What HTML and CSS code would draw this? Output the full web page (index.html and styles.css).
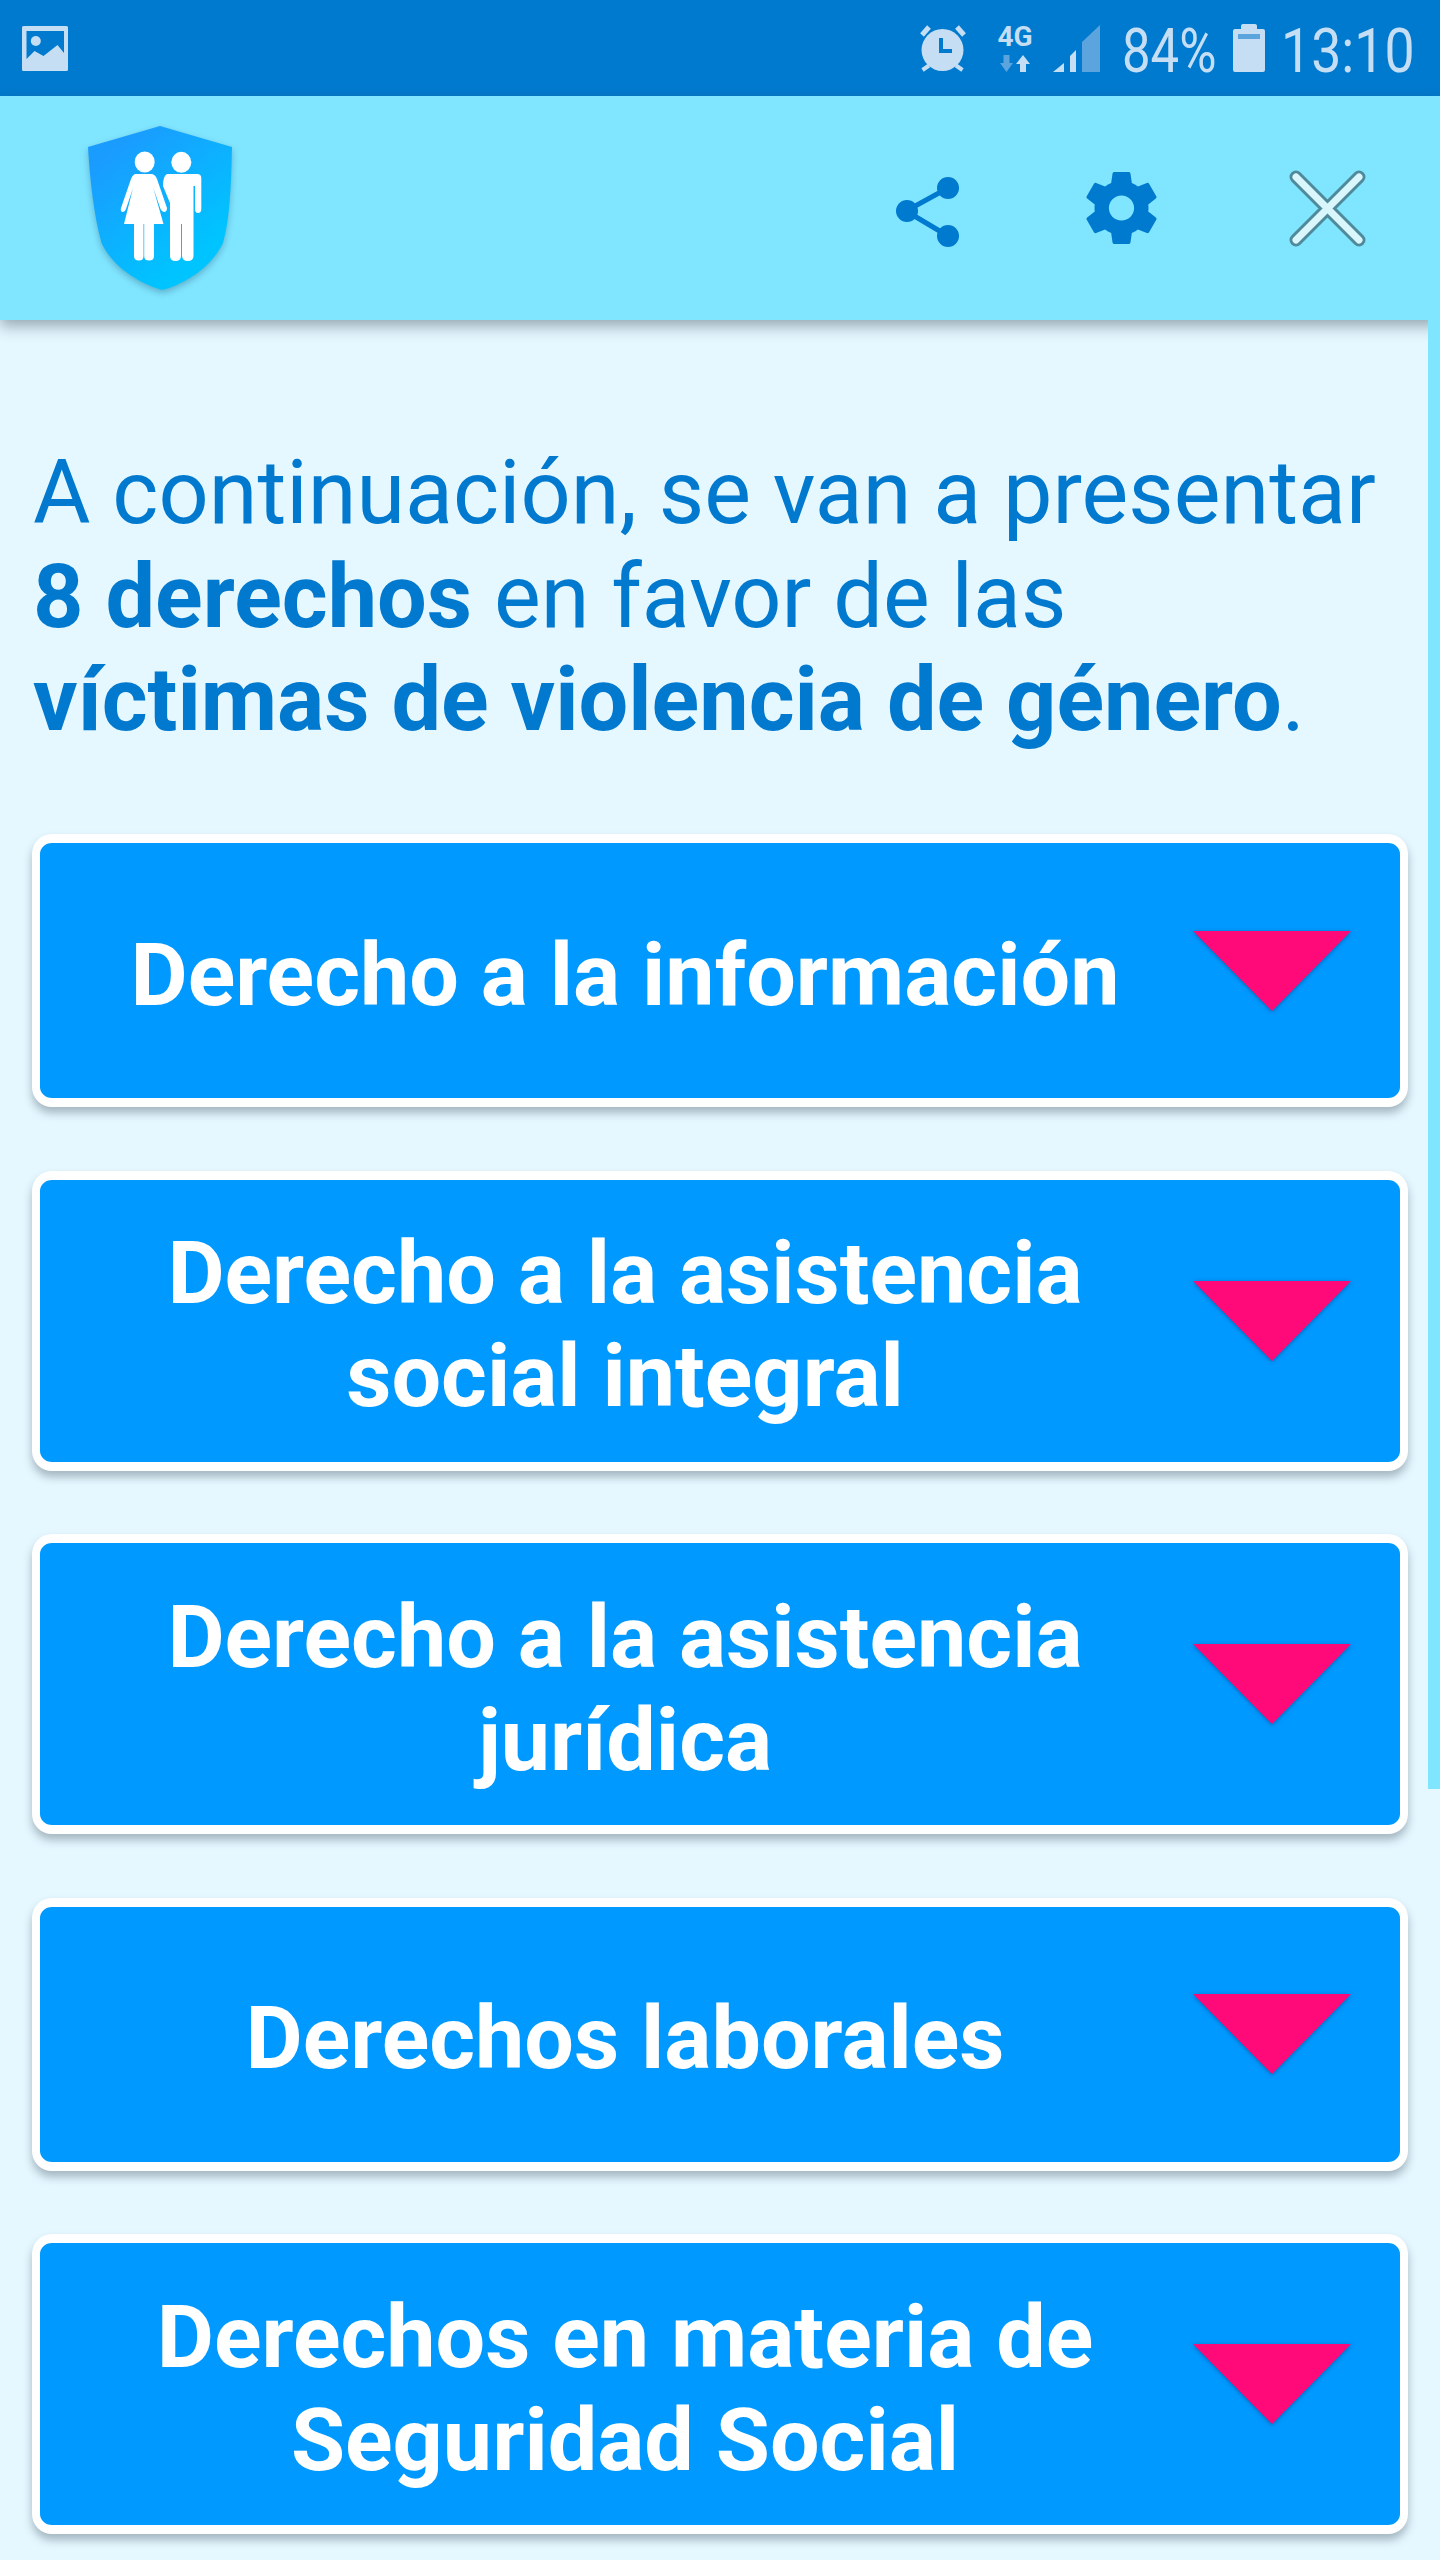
FILE: index.html
```html
<!DOCTYPE html>
<html lang="es">
<head>
  <meta charset="UTF-8">
  <title>Derechos</title>
  <link rel="stylesheet" href="styles.css">
</head>
<body>
  <div class="status">
    <svg width="46" height="45" viewBox="0 0 46 45">
      <path fill="#c5def3" fill-rule="evenodd" d="M1.500 0h43A1.500 1.500 0 0 1 46 1.500v42a1.500 1.500 0 0 1-1.500 1.500h-43A1.500 1.500 0 0 1 0 43.500v-42A1.500 1.500 0 0 1 1.500 0zM4.500 5v28l8-8 9 5 14-11 6.500 8V5z"/>
      <circle cx="13.800" cy="15" r="5" fill="#c5def3"/>
    </svg>
    <div class="st-right">
      <svg class="st-alarm" width="48" height="48" viewBox="0 0 48 48">
        <circle cx="23.500" cy="26" r="21" fill="#c5def3"/>
        <path d="M3 11 10 3M45 11 38 3" stroke="#c5def3" stroke-width="5" fill="none"/>
        <path d="M3.500 46 10 41.500M43.500 46 37 41.500" stroke="#c5def3" stroke-width="4" fill="none"/>
        <path d="M22 14v13h11" fill="none" stroke="#007acf" stroke-width="4"/>
      </svg>
      <div class="st-net">
        <span class="st-4g">4G</span>
        <svg width="30" height="17" viewBox="0 0 30 17">
          <path d="M3.500 0h6v8H13l-6.500 9L0 8h3.500z" fill="#5ba4de"/>
          <path d="M23 0l7 9h-4v8h-6V9h-4z" fill="#c5def3"/>
        </svg>
      </div>
      <svg class="st-signal" width="47" height="47" viewBox="0 0 47 47">
        <path d="M0 47 11 38v9z" fill="#c5def3"/>
        <path d="M17 31l6-6v22h-6z" fill="#c5def3"/>
        <path d="M29 17 47 0v47H29z" fill="#5ba4de"/>
      </svg>
      <span class="st-text st-pct">84%</span>
      <svg class="st-batt" width="32" height="48" viewBox="0 0 32 48">
        <path fill="#c5def3" d="M2 5h6V2a2 2 0 0 1 2-2h12a2 2 0 0 1 2 2v3h6a2 2 0 0 1 2 2v39a2 2 0 0 1-2 2H2a2 2 0 0 1-2-2V7a2 2 0 0 1 2-2z"/>
        <rect x="5" y="10" width="22" height="5" fill="#5ba4de"/>
      </svg>
      <span class="st-text st-time">13:10</span>
    </div>
  </div>

  <header class="topbar">
    <svg class="logo" width="144" height="164" viewBox="0 0 144 164">
      <defs>
        <linearGradient id="shield" x1="0.1" y1="0.2" x2="0.6" y2="0.9">
          <stop offset="0" stop-color="#1a9cff"/>
          <stop offset="1" stop-color="#00c4ff"/>
        </linearGradient>
      </defs>
      <path d="M72 0 144 21C143 60 142 92 135 117 124 140 98 158 74 164 50 157 24 140 13.500 117 6 90 2 55 0 21z" fill="url(#shield)"/>
      <g fill="#fff">
        <ellipse cx="56.700" cy="36" rx="10" ry="10.500"/>
        <ellipse cx="93.300" cy="36.300" rx="10" ry="10.500"/>
        <path d="M48 48H63Q67 48 69 53L79 82Q79 86 76 86 74 86 72.500 83L65 61 75.500 98H66V130Q66 134.500 61 134.500 56.200 134.500 56.200 130V98H55.500V130Q55.500 134.500 51 134.500 46 134.500 46 130V98H36L45 62 38 83Q37 86 35 86 32 86 33 82L43 53Q45 48 48 48z"/>
        <path d="M79 48H109Q113.300 48 113.300 52V83Q113.300 87 110 87 107 87 107 83V60H105.500V130Q105.500 135 99.500 135 94.500 135 94 130V98H93V130Q93 135 87.500 135 82 135 82 130V77L75 60Q75 50 79 48z"/>
      </g>
    </svg>
    <div class="actions">
      <svg class="act-share" width="64" height="70" viewBox="0 0 64 70">
        <path d="M52 11 10 34l42 25" fill="none" stroke="#007acf" stroke-width="5"/>
        <circle cx="52" cy="11" r="11" fill="#007acf"/>
        <circle cx="11" cy="34" r="11" fill="#007acf"/>
        <circle cx="52" cy="59" r="11" fill="#007acf"/>
      </svg>
      <svg width="71" height="72" viewBox="2.400 2 19.200 20">
        <path fill="#007acf" d="M19.430 12.980c.04-.32.07-.64.07-.98s-.03-.66-.07-.98l2.110-1.650c.19-.15.240-.42.120-.64l-2-3.460c-.12-.22-.390-.30-.610-.22l-2.490 1c-.520-.4-1.080-.73-1.690-.98l-.38-2.650C14.460 2.180 14.250 2 14 2h-4c-.25 0-.46.18-.490.42l-.38 2.650c-.610.25-1.170.59-1.690.98l-2.490-1c-.23-.09-.49 0-.610.22l-2 3.460c-.13.22-.07.49.12.640l2.110 1.650c-.04.32-.07.65-.07.98s.03.66.07.98l-2.110 1.650c-.19.15-.24.42-.12.640l2 3.460c.12.22.39.3.610.22l2.490-1c.52.4 1.080.73 1.690.98l.38 2.650c.03.24.24.42.49.42h4c.25 0 .46-.18.490-.42l.38-2.650c.610-.25 1.170-.59 1.690-.98l2.490 1c.23.09.49 0 .610-.22l2-3.460c.12-.22.07-.49-.12-.640zM12 15.500c-1.930 0-3.500-1.570-3.500-3.500s1.570-3.500 3.500-3.500 3.500 1.570 3.500 3.500-1.570 3.500-3.500 3.500z"/>
      </svg>
      <svg width="79" height="79" viewBox="0 0 79 79">
        <path d="M8 8 71 71M71 8 8 71" fill="none" stroke="#4f8a9b" stroke-width="13" stroke-linecap="round"/>
        <path d="M8 8 71 71M71 8 8 71" fill="none" stroke="#d9f6fd" stroke-width="7" stroke-linecap="round"/>
      </svg>
    </div>
  </header>

  <main class="content">
    <p class="intro">A continuación, se van a presentar <b>8 derechos</b> en favor de las <b>víctimas de violencia de género</b>.</p>

    <div class="card"><span class="card-title">Derecho a la información</span><i class="arrow"></i></div>
    <div class="card card-tall"><span class="card-title">Derecho a la asistencia<br>social integral</span><i class="arrow"></i></div>
    <div class="card card-tall"><span class="card-title">Derecho a la asistencia<br>jurídica</span><i class="arrow"></i></div>
    <div class="card"><span class="card-title">Derechos laborales</span><i class="arrow"></i></div>
    <div class="card card-tall"><span class="card-title">Derechos en materia de<br>Seguridad Social</span><i class="arrow"></i></div>
  </main>
  <div class="scrollthumb"></div>
</body>
</html>
```

FILE: styles.css
```css
html, body {
  margin: 0;
  padding: 0;
}

body {
  width: 1440px;
  height: 2560px;
  overflow: hidden;
  position: relative;
  background-color: #e5f7ff;
  font-family: Roboto, sans-serif;
}

.status {
  height: 96px;
  background-color: #007acf;
  display: flex;
  justify-content: space-between;
  align-items: center;
  padding: 0 28px 0 22px;
  box-sizing: border-box;
}

.st-right {
  display: flex;
  align-items: center;
}

.st-alarm {
  margin-right: 29px;
}

.st-net {
  display: flex;
  flex-direction: column;
  align-items: center;
  gap: 8px;
  width: 38px;
  margin-top: 3px;
  margin-right: 19px;
}

.st-4g {
  color: #c5def3;
  font-size: 28px;
  font-weight: 700;
  line-height: 20px;
}

.st-signal {
  margin-right: 22px;
}

.st-text {
  color: #c5def3;
  font-size: 62px;
  font-weight: 400;
  line-height: 60px;
  margin-top: 5px;
  white-space: nowrap;
  transform: scaleX(0.82);
  transform-origin: left;
}

.st-pct {
  width: 93px;
  margin-right: 18px;
}

.st-batt {
  margin-right: 16px;
}

.st-time {
  width: 131px;
  transform: scaleX(0.865);
}

.topbar {
  height: 224px;
  background-color: #80e5ff;
  display: flex;
  justify-content: space-between;
  align-items: center;
  padding: 0 73px 0 88px;
  box-sizing: border-box;
  box-shadow: 0 6px 14px rgba(50, 70, 80, 0.45);
  position: relative;
}

.logo {
  filter: drop-shadow(0 3px 3px rgba(30, 80, 110, 0.35));
}

.actions {
  display: flex;
  align-items: center;
}

.actions svg + svg {
  margin-left: 126px;
}

.actions svg:last-child {
  margin-left: 131px;
}

.act-share {
  margin-top: 8px;
}

.content {
  padding: 0 32px;
}

.intro {
  margin: 0 0 81.5px;
  padding: 122px 0 0 1px;
  font-size: 88.15px;
  line-height: 103.5px;
  font-weight: 400;
  color: #0079cf;
}

.intro b {
  font-weight: 700;
}

.card {
  height: 273px;
  box-sizing: border-box;
  margin-bottom: 63.5px;
  padding-left: 20px;
  border: solid #fff;
  border-width: 9px 8px;
  border-radius: 20px;
  background-color: #0099ff;
  box-shadow: 0 6px 8px rgba(70, 90, 100, 0.4);
  display: flex;
  align-items: center;
  color: #fff;
}

.card-tall {
  height: 300px;
}

.card-title {
  width: 1130px;
  padding-top: 7px;
  text-align: center;
  font-size: 88px;
  font-weight: 700;
  line-height: 103px;
}

.arrow {
  margin-left: 3px;
  width: 0;
  height: 0;
  border-left: 79px solid transparent;
  border-right: 79px solid transparent;
  border-top: 80px solid #ff0a78;
  filter: drop-shadow(0 1px 2px rgba(0, 50, 110, 0.5));
}

.scrollthumb {
  position: absolute;
  right: 0;
  top: 320px;
  width: 12px;
  height: 1469px;
  background-color: #80e5ff;
}
```
